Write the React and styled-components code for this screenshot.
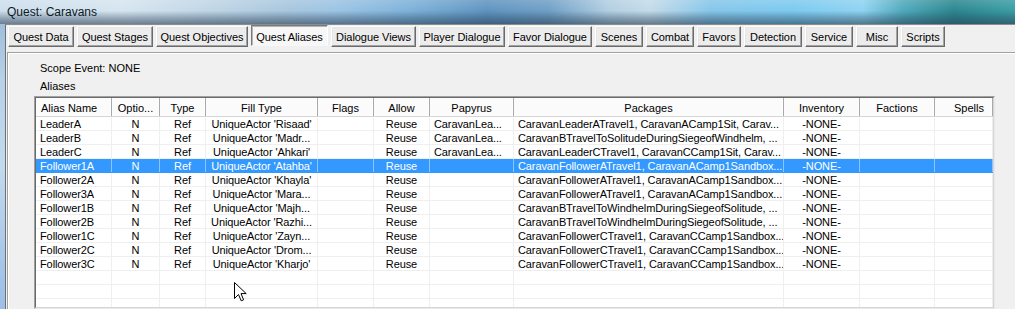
import React from "react";
import styled, { createGlobalStyle } from "styled-components";

const Global = createGlobalStyle`
  html, body { margin: 0; padding: 0; width: 1015px; height: 309px; overflow: hidden; background: #f0f0f0; }
  #root { width: 1015px; height: 309px; }
  * { box-sizing: border-box; }
`;

const Window = styled.div`
  position: relative;
  width: 1015px;
  height: 309px;
  overflow: hidden;
  display: flex;
  flex-direction: column;
  font-family: "Liberation Sans", Arial, sans-serif;
  font-size: 11px;
  color: #000;
`;

const TitleBar = styled.div`
  height: 24px;
  flex: none;
  display: flex;
  align-items: flex-start;
  padding: 4px 0 0 7px;
  background:
    linear-gradient(180deg, rgba(255,255,255,0.15) 0%, rgba(255,255,255,0) 45%, rgba(40,62,84,0.35) 75%, rgba(40,62,84,0.6) 100%),
    linear-gradient(90deg, #cddfec 0%, #d6e5f0 12%, #bcd3e4 22%, #a9c7de 28%, #9cc4e4 33%, #7fb3da 40%, #5f94c0 48%, #6f9fc6 54%, #b2cfe2 60%, #c4dbe9 64%, #86c6ea 70%, #7ccaf0 78%, #8fd3f1 85%, #4fa9bb 89%, #2b878f 94%, #3a9ea4 100%);
`;

const Title = styled.span`
  font-family: "Liberation Sans", Arial, sans-serif;
  font-size: 12px;
  line-height: 16px;
  color: #0d1a24;
`;

const Body = styled.div`
  flex: 1;
  display: flex;
  min-height: 0;
`;

const FrameEdge = styled.div`
  width: 5px;
  flex: none;
  background: linear-gradient(180deg, #9fbfdc 0%, #b7d1e9 20%, #c2d9ee 50%, #a9c8ea 80%, #9cbfe6 100%);
`;

const Client = styled.div`
  flex: 1;
  display: flex;
  flex-direction: column;
  background: #f0f0f0;
  border-left: 1px solid #6f6f6f;
  border-top: 1px solid #8d8d8d;
  min-width: 0;
`;

const TabStrip = styled.div`
  display: flex;
  gap: 3px;
  padding: 1px 0 0 2px;
  height: 22px;
  flex: none;
`;

const Tab = styled.div`
  width: ${(p) => p.$w}px;
  height: 21px;
  flex: none;
  display: flex;
  align-items: center;
  justify-content: center;
  white-space: nowrap;
  font-size: 11px;
  letter-spacing: -0.05px;
  background: ${(p) => (p.$active ? "#f7f7f7" : "#ececec")};
  border: 1px solid;
  border-color: ${(p) =>
    p.$active ? "#7a7a7a #ffffff #f7f7f7 #7a7a7a" : "#ffffff #6b6b6b #6b6b6b #ffffff"};
  box-shadow: ${(p) =>
    p.$active ? "inset 1px 1px 0 #b4b4b4" : "inset -1px -1px 0 #a3a3a3, inset 1px 1px 0 #e6e6e6"};
  padding-top: ${(p) => (p.$active ? "2px" : "0")};
  margin-top: ${(p) => (p.$active ? "-1px" : "0")};
`;

const Panel = styled.div`
  flex: 1;
  margin: 5px 0 0 1px;
  border-top: 1px solid #a0a0a0;
  border-left: 1px solid #a0a0a0;
  box-shadow: inset 1px 1px 0 #ffffff;
  padding: 8px 0 0 26px;
  display: flex;
  flex-direction: column;
  min-height: 0;
`;

const Label = styled.div`
  margin-left: 6px;
  line-height: 14px;
  height: 14px;
  margin-bottom: ${(p) => p.$gap || 0}px;
`;

const ListOuter = styled.div`
  width: 961px;
  flex: 1;
  border: 1px solid;
  border-color: #a0a0a0 #e8e8e8 #e8e8e8 #a0a0a0;
  min-height: 0;
`;

const ListInner = styled.div`
  height: 100%;
  background: #fff;
  border: 1px solid;
  border-color: #6a6a6a #d6d6d6 #d6d6d6 #6a6a6a;
  overflow: hidden;
`;

const HeaderRow = styled.div`
  display: flex;
  height: 19px;
  background: #fbfbfb;
  border-bottom: 1px solid #d5d5d5;
`;

const HeaderCell = styled.div`
  width: ${(p) => p.$w}px;
  flex: none;
  display: flex;
  align-items: center;
  justify-content: ${(p) => (p.$align === "left" ? "flex-start" : p.$align === "right" ? "flex-end" : "center")};
  padding: 1px ${(p) => (p.$align === "right" ? 8 : 5)}px 0 5px;
  border-right: 1px solid #a9a9a9;
  box-shadow: inset -1px 0 0 #ffffff;
  white-space: nowrap;
  overflow: hidden;
`;

const Row = styled.div`
  display: flex;
  height: 14px;
  background: ${(p) => (p.$selected ? "#3399ff" : "#ffffff")};
  color: ${(p) => (p.$selected ? "#ffffff" : "#000000")};
  border-bottom: 1px solid ${(p) => (p.$selected ? "#3399ff" : "#efefef")};
`;

const Cell = styled.div`
  width: ${(p) => p.$w}px;
  flex: none;
  height: 13px;
  line-height: 13px;
  padding: 1px 4px 0;
  text-align: ${(p) => p.$align};
  letter-spacing: -0.1px;
  border-right: 1px solid ${(p) => (p.$selected ? "#8cc6ff" : "#efefef")};
  white-space: nowrap;
  overflow: hidden;
`;

const Cursor = styled.svg`
  position: absolute;
  left: 234px;
  top: 282px;
  width: 13px;
  height: 20px;
`;

const tabs = [
  ["Quest Data", 66],
  ["Quest Stages", 76],
  ["Quest Objectives", 92],
  ["Quest Aliases", 77, true],
  ["Dialogue Views", 85],
  ["Player Dialogue", 86],
  ["Favor Dialogue", 84],
  ["Scenes", 48],
  ["Combat", 48],
  ["Favors", 44],
  ["Detection", 58],
  ["Service", 48],
  ["Misc", 42],
  ["Scripts", 44],
];

const columns = [
  { label: "Alias Name", w: 76, align: "left", h: "left" },
  { label: "Optio...", w: 48, align: "center", h: "center" },
  { label: "Type", w: 46, align: "center", h: "center" },
  { label: "Fill Type", w: 112, align: "center", h: "center" },
  { label: "Flags", w: 56, align: "center", h: "center" },
  { label: "Allow", w: 56, align: "center", h: "center" },
  { label: "Papyrus", w: 84, align: "left", h: "center" },
  { label: "Packages", w: 270, align: "left", h: "center" },
  { label: "Inventory", w: 76, align: "center", h: "center" },
  { label: "Factions", w: 75, align: "center", h: "center" },
  { label: "Spells", w: 58, align: "center", h: "right" },
];

const rows = [
  ["LeaderA", "N", "Ref", "UniqueActor 'Risaad'", "", "Reuse", "CaravanLea...", "CaravanLeaderATravel1, CaravanACamp1Sit, Carav...", "-NONE-", "", ""],
  ["LeaderB", "N", "Ref", "UniqueActor 'Madr...", "", "Reuse", "CaravanLea...", "CaravanBTravelToSolitudeDuringSiegeofWindhelm, ...", "-NONE-", "", ""],
  ["LeaderC", "N", "Ref", "UniqueActor 'Ahkari'", "", "Reuse", "CaravanLea...", "CaravanLeaderCTravel1, CaravanCCamp1Sit, Carav...", "-NONE-", "", ""],
  ["Follower1A", "N", "Ref", "UniqueActor 'Atahba'", "", "Reuse", "", "CaravanFollowerATravel1, CaravanACamp1Sandbox...", "-NONE-", "", ""],
  ["Follower2A", "N", "Ref", "UniqueActor 'Khayla'", "", "Reuse", "", "CaravanFollowerATravel1, CaravanACamp1Sandbox...", "-NONE-", "", ""],
  ["Follower3A", "N", "Ref", "UniqueActor 'Mara...", "", "Reuse", "", "CaravanFollowerATravel1, CaravanACamp1Sandbox...", "-NONE-", "", ""],
  ["Follower1B", "N", "Ref", "UniqueActor 'Majh...", "", "Reuse", "", "CaravanBTravelToWindhelmDuringSiegeofSolitude, ...", "-NONE-", "", ""],
  ["Follower2B", "N", "Ref", "UniqueActor 'Razhi...", "", "Reuse", "", "CaravanBTravelToWindhelmDuringSiegeofSolitude, ...", "-NONE-", "", ""],
  ["Follower1C", "N", "Ref", "UniqueActor 'Zayn...", "", "Reuse", "", "CaravanFollowerCTravel1, CaravanCCamp1Sandbox...", "-NONE-", "", ""],
  ["Follower2C", "N", "Ref", "UniqueActor 'Drom...", "", "Reuse", "", "CaravanFollowerCTravel1, CaravanCCamp1Sandbox...", "-NONE-", "", ""],
  ["Follower3C", "N", "Ref", "UniqueActor 'Kharjo'", "", "Reuse", "", "CaravanFollowerCTravel1, CaravanCCamp1Sandbox...", "-NONE-", "", ""],
];

const SELECTED = 3;
const emptyRows = Array.from({ length: 5 }, () => columns.map(() => ""));

export default function App() {
  return (
    <>
      <Global />
      <Window>
        <TitleBar>
          <Title>Quest: Caravans</Title>
        </TitleBar>
        <Body>
          <FrameEdge />
          <Client>
            <TabStrip>
              {tabs.map(([t, w, active]) => (
                <Tab key={t} $w={w} $active={active}>
                  {t}
                </Tab>
              ))}
            </TabStrip>
            <Panel>
              <Label $gap={4}>Scope Event: NONE</Label>
              <Label $gap={3}>Aliases</Label>
              <ListOuter>
                <ListInner>
                  <HeaderRow>
                    {columns.map((c) => (
                      <HeaderCell key={c.label} $w={c.w} $align={c.h}>
                        {c.label}
                      </HeaderCell>
                    ))}
                  </HeaderRow>
                  {[...rows, ...emptyRows].map((r, i) => (
                    <Row key={i} $selected={i === SELECTED}>
                      {r.map((v, j) => (
                        <Cell key={j} $w={columns[j].w} $align={columns[j].align} $selected={i === SELECTED}>
                          {v}
                        </Cell>
                      ))}
                    </Row>
                  ))}
                </ListInner>
              </ListOuter>
            </Panel>
          </Client>
        </Body>
        <Cursor viewBox="0 0 13 20">
          <path d="M0.5 0.5 L0.5 16.5 L4.5 12.5 L7.2 18.8 L9.6 17.8 L7 11.6 L12.2 11.6 Z" fill="#fff" stroke="#000" strokeWidth="1" strokeLinejoin="miter" />
        </Cursor>
      </Window>
    </>
  );
}
